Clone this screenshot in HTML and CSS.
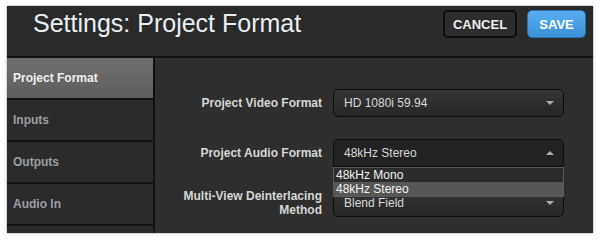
FILE: index.html
```html
<!DOCTYPE html>
<html lang="en">
<head>
    <meta charset="UTF-8">
    <title>Settings: Project Format</title>
    <link rel="stylesheet" href="styles.css">
</head>
<body>
    <div class="frame">
        <div class="header">
            <h1>Settings: Project Format</h1>
            <div class="actions">
                <button class="btn btn-cancel">CANCEL</button>
                <button class="btn btn-save">SAVE</button>
            </div>
        </div>
        <div class="content">
            <ul class="sidebar">
                <li class="active">Project Format</li>
                <li>Inputs</li>
                <li>Outputs</li>
                <li>Audio In</li>
                <li></li>
            </ul>
            <div class="main">
                <div class="row">
                    <label>Project Video Format</label>
                    <div class="select">HD 1080i 59.94<span class="arrow down"></span></div>
                </div>
                <div class="row">
                    <label>Project Audio Format</label>
                    <div class="select open">48kHz Stereo<span class="arrow up"></span>
                        <ul class="options">
                            <li>48kHz Mono</li>
                            <li class="selected">48kHz Stereo</li>
                        </ul>
                    </div>
                </div>
                <div class="row">
                    <label>Multi-View Deinterlacing<br>Method</label>
                    <div class="select">Blend Field<span class="arrow down"></span></div>
                </div>
            </div>
        </div>
    </div>
</body>
</html>
```

FILE: styles.css
```css
body {
    margin: 0;
    background-color: #fff;
    font-family: "Liberation Sans", Arial, sans-serif;
}

.frame {
    margin: 6px 7px;
    width: 586px;
    height: 227px;
    background-color: #2e2e2e;
    box-shadow: 0 0 2px rgba(0, 0, 0, 0.5);
    overflow: hidden;
}

.header {
    box-sizing: border-box;
    height: 52px;
    background-color: #2a2a2a;
    border-bottom: 2px solid #111;
    display: flex;
    align-items: flex-start;
    justify-content: space-between;
    padding: 4px 7px 0 26px;
}

h1 {
    margin: -1px 0 0 0;
    font-weight: normal;
    font-size: 25px;
    line-height: 28px;
    color: #e8eef2;
}

.actions {
    display: flex;
    gap: 10px;
}

.btn {
    height: 28px;
    font-family: "Liberation Sans", Arial, sans-serif;
    font-weight: bold;
    font-size: 13px;
    color: #eee;
    border-radius: 5px;
    padding: 0;
    cursor: pointer;
}

.btn-cancel {
    width: 74px;
    background-color: #2c2c2c;
    border: 2px solid #0c0c0c;
}

.btn-save {
    width: 59px;
    background: linear-gradient(#5aaef0, #3b8fd6);
    border: 1px solid #2a6fae;
    color: #fff;
}

.content {
    display: flex;
    height: 175px;
}

.sidebar {
    list-style: none;
    margin: 0;
    padding: 0;
    width: 146px;
    border-right: 2px solid #111;
    background-color: #2b2b2b;
}

.sidebar li {
    height: 40px;
    line-height: 40px;
    border-bottom: 2px solid #111;
    padding-left: 6px;
    font-weight: bold;
    font-size: 12px;
    color: #9a9ea2;
}

.sidebar li.active {
    background: linear-gradient(#6e6e6e, #5e5e5e);
    color: #f0f0f0;
}

.main {
    flex: 1;
    padding-top: 31px;
    display: flex;
    flex-direction: column;
    gap: 22px;
}

.row {
    display: flex;
    align-items: center;
    height: 28px;
}

.row label {
    width: 167px;
    text-align: right;
    font-weight: bold;
    font-size: 12px;
    line-height: 14px;
    color: #d6d6d6;
    margin-right: 11px;
}

.select {
    position: relative;
    box-sizing: border-box;
    width: 231px;
    height: 28px;
    line-height: 26px;
    padding-left: 10px;
    font-size: 12px;
    color: #d8d8d8;
    background: linear-gradient(#363636, #262626);
    border: 1px solid #0c0c0c;
    border-radius: 5px;
}

.select.open {
    background: #222;
    border-radius: 5px 5px 0 0;
    z-index: 2;
}

.arrow {
    position: absolute;
    right: 9px;
    top: 11px;
    width: 0;
    height: 0;
    border-left: 4px solid transparent;
    border-right: 4px solid transparent;
}

.arrow.down {
    border-top: 4px solid #aaa;
}

.arrow.up {
    border-bottom: 4px solid #aaa;
}

.options {
    position: absolute;
    left: -1px;
    top: 27px;
    width: 231px;
    box-sizing: border-box;
    list-style: none;
    margin: 0;
    padding: 0;
    background-color: #2c2c2c;
    border: 1px solid #5a5a5a;
}

.options li {
    height: 14px;
    line-height: 14px;
    padding-left: 2px;
    color: #f2f2f2;
}

.options li.selected {
    background-color: #575757;
}
```
